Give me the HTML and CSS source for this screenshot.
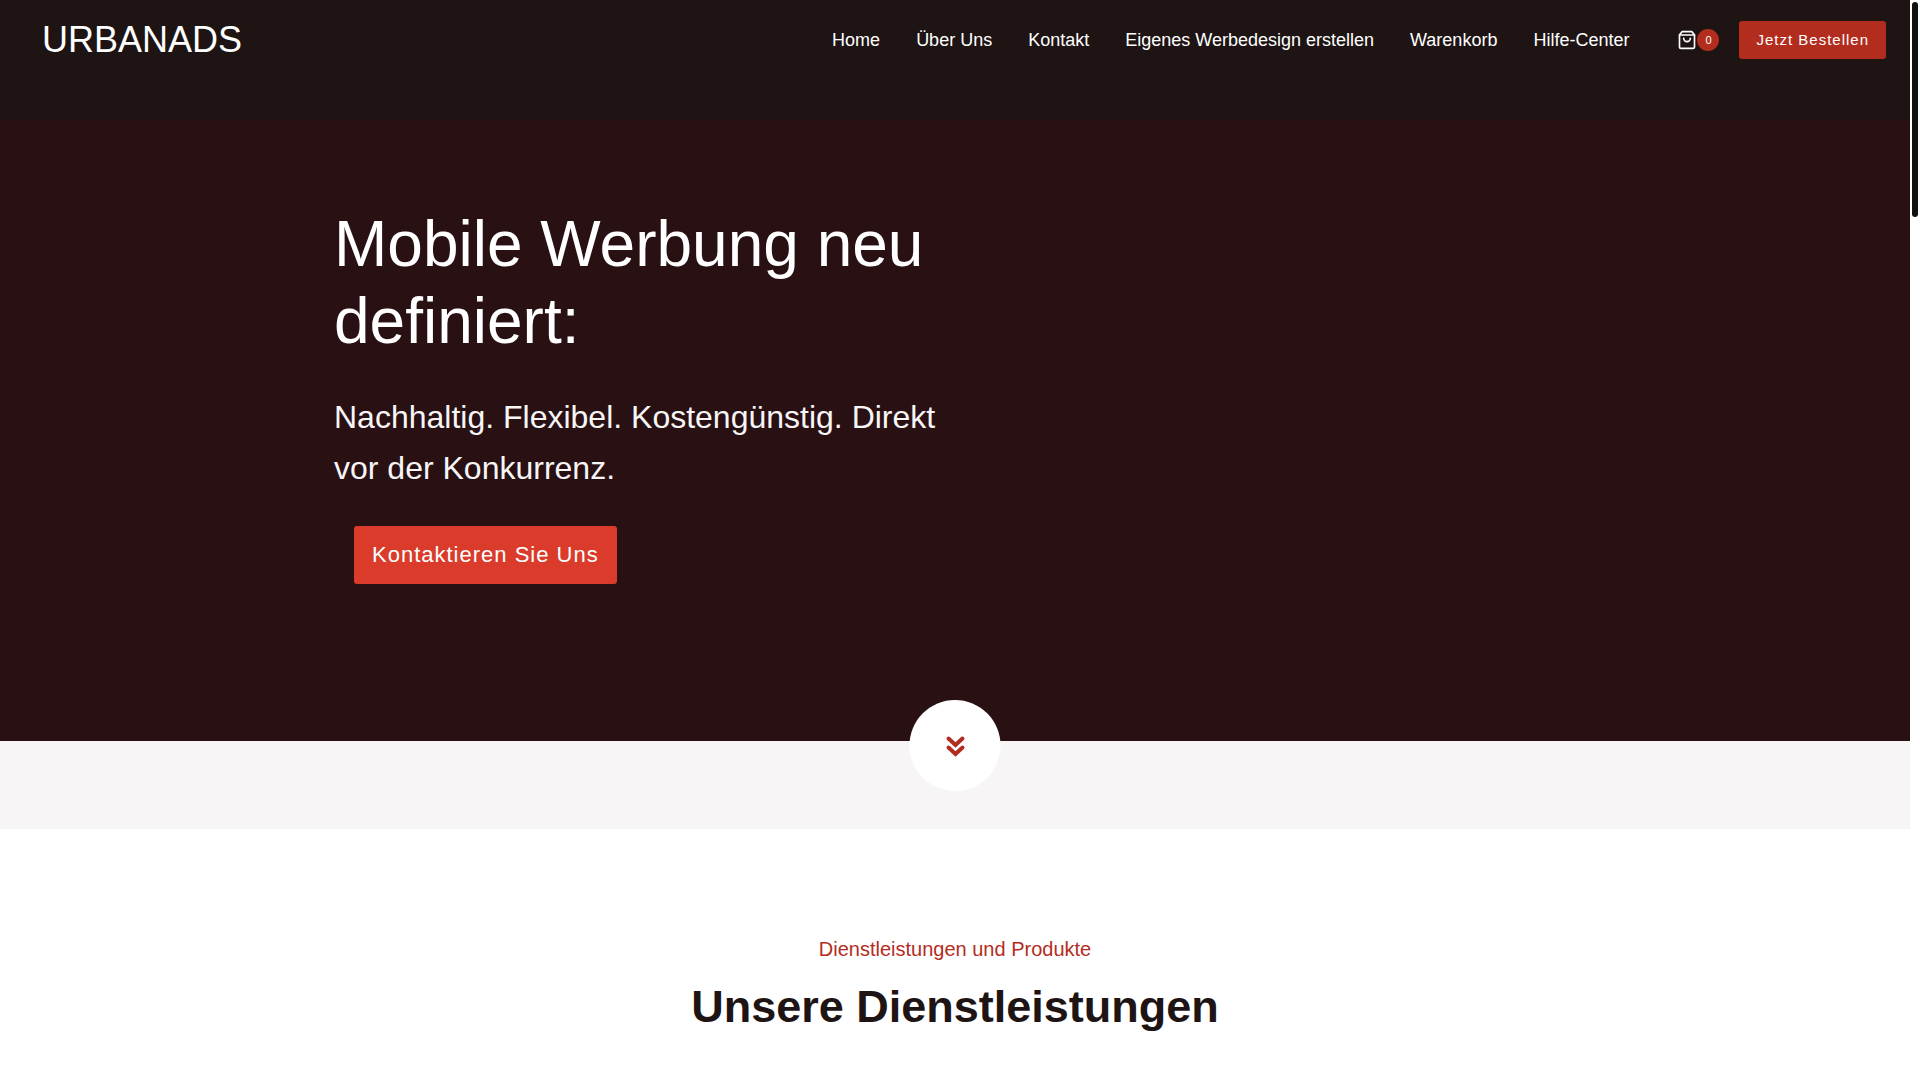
FILE: index.html
```html
<!DOCTYPE html>
<html lang="de">
<head>
    <meta charset="UTF-8">
    <meta name="viewport" content="width=device-width, initial-scale=1.0">
    <title>URBANADS</title>
    <link rel="stylesheet" href="styles.css">
</head>
<body>
    <header class="site-header">
        <a class="logo" href="#">URBANADS</a>
        <nav class="main-nav">
            <a href="#">Home</a>
            <a href="#">Über Uns</a>
            <a href="#">Kontakt</a>
            <a href="#">Eigenes Werbedesign erstellen</a>
            <a href="#">Warenkorb</a>
            <a href="#">Hilfe-Center</a>
        </nav>
        <a class="cart" href="#" aria-label="Warenkorb">
            <svg class="cart-icon" viewBox="0 0 24 24">
                <path d="M6 2L3 6v14a2 2 0 0 0 2 2h14a2 2 0 0 0 2-2V6l-3-4z"></path>
                <path d="M3 6h18"></path>
                <path d="M16 10a4 4 0 0 1-8 0"></path>
            </svg>
            <span class="cart-count">0</span>
        </a>
        <a class="btn btn-order" href="#">Jetzt Bestellen</a>
    </header>

    <main>
        <section class="hero">
            <div class="container">
                <div class="hero-text">
                    <h1>Mobile Werbung neu definiert:</h1>
                    <p>Nachhaltig. Flexibel. Kostengünstig. Direkt vor der Konkurrenz.</p>
                    <a class="btn btn-contact" href="#">Kontaktieren Sie Uns</a>
                </div>
            </div>
        </section>

        <section class="strip">
            <a class="scroll-down" href="#services" aria-label="Nach unten">
                <svg viewBox="0 0 24 24">
                    <path d="M5 4.5l7 6.5 7-6.5"></path>
                    <path d="M5 13.5l7 6.5 7-6.5"></path>
                </svg>
            </a>
        </section>

        <section class="services" id="services">
            <p class="services-label">Dienstleistungen und Produkte</p>
            <h2>Unsere Dienstleistungen</h2>
        </section>
    </main>

    <div class="scrollbar"><div class="scrollbar-thumb"></div></div>
</body>
</html>
```

FILE: styles.css
```css
* {
    box-sizing: border-box;
}

body {
    margin: 0;
    padding-right: 10px;
    font-family: "Liberation Sans", Arial, sans-serif;
    color: #1e1414;
    background-color: #fff;
}

a {
    color: inherit;
    text-decoration: none;
}

/* Header */
.site-header {
    display: flex;
    align-items: center;
    padding: 0 24px 40px 42px;
    height: 120px;
    background-color: #1e1414;
    color: #fff;
}

.logo {
    margin-right: auto;
    font-size: 36px;
}

.main-nav {
    display: flex;
    gap: 36px;
    font-size: 18px;
}

.cart {
    display: flex;
    align-items: center;
    margin: 0 20px 0 48px;
}

.cart-icon {
    width: 20px;
    height: 20px;
    fill: none;
    stroke: #fff;
    stroke-width: 2;
    stroke-linecap: round;
    stroke-linejoin: round;
}

.cart-count {
    width: 22px;
    border-radius: 50%;
    background-color: #b32d1e;
    font-size: 11px;
    line-height: 22px;
    text-align: center;
}

.btn {
    display: inline-block;
    border-radius: 3px;
    letter-spacing: 1px;
    color: #fff;
}

.btn-order {
    padding: 0 17px;
    background-color: #b32d1e;
    font-size: 15px;
    line-height: 38px;
}

/* Hero */
.hero {
    padding: 86px 40px 157px;
    background-color: #281013;
    color: #fff;
}

.container {
    max-width: 1242px;
    margin: 0 auto;
}

.hero-text {
    width: 50%;
}

.hero h1 {
    margin: 0 0 32px;
    font-size: 64px;
    font-weight: 400;
    line-height: 77px;
}

.hero p {
    margin: 0 0 32px;
    font-size: 32px;
    line-height: 51px;
    color: #f7f5f6;
}

.btn-contact {
    margin-left: 20px;
    padding: 0 18px;
    background-color: #da3b2a;
    font-size: 22px;
    line-height: 58px;
}

/* Grey strip with the scroll button */
.strip {
    position: relative;
    height: 88px;
    background-color: #f7f5f6;
}

.scroll-down {
    position: absolute;
    top: -41px;
    left: 50%;
    display: flex;
    align-items: center;
    justify-content: center;
    width: 91px;
    height: 91px;
    border-radius: 50%;
    background-color: #fff;
    transform: translateX(-50%);
}

.scroll-down svg {
    width: 24px;
    height: 24px;
    fill: none;
    stroke: #b32d1e;
    stroke-width: 4;
    stroke-linecap: round;
}

/* Services */
.services {
    padding: 104px 40px 40px;
    text-align: center;
}

.services-label {
    margin: 0 0 15px;
    font-size: 20px;
    line-height: 32px;
    color: #b32d1e;
}

.services h2 {
    margin: 0;
    font-size: 45px;
    line-height: 54px;
}

/* Scrollbar */
.scrollbar {
    position: fixed;
    top: 0;
    right: 0;
    bottom: 0;
    width: 10px;
    padding: 2px;
    background-color: #fff;
}

.scrollbar-thumb {
    height: 20%;
    border-radius: 3px;
    background-color: #111;
}
```
